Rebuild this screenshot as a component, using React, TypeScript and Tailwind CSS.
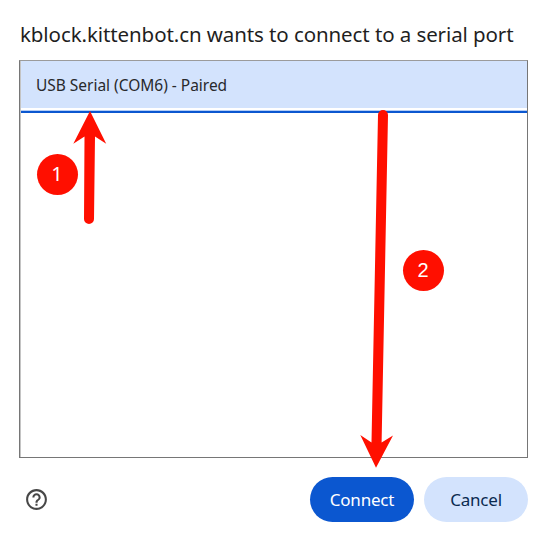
import React from 'react';
import { MdHelpOutline } from 'react-icons/md';

interface Port {
  id: string;
  name: string;
  paired: boolean;
}

const ports: Port[] = [{ id: 'com6', name: 'USB Serial (COM6)', paired: true }];

function PortList() {
  return (
    <div className="h-[398px] border border-[#767676] border-t-[#9b9b9b] bg-white">
      <div className="h-full border-l border-[#c4c4c4]">
        {ports.map((port) => (
          <div key={port.id} className="border-b-2 border-[#0b57d0]">
            <div className="flex h-[47px] items-center bg-[#d3e3fd] pl-[15px] text-[15.5px] text-[#28292c]">
              <span className="mt-[3px] tracking-[-0.02px] whitespace-nowrap">
                {port.name}
                {port.paired && ' - Paired'}
              </span>
            </div>
            <div className="h-[3px] border-b border-[#b4cdf5]" />
          </div>
        ))}
      </div>
    </div>
  );
}

function Arrows() {
  return (
    <svg className="pointer-events-none absolute inset-0" width="548" height="540" viewBox="0 0 548 540">
      <g fill="#ff0f00" stroke="none">
        <path d="M90 111 L106.2 143.8 L95 136.5 L94 219 A5 5 0 0 1 84 219 L84.5 136.5 L73.3 143.8 Z" />
        <path d="M378 115 A5 5 0 0 1 388 115 L381.6 442.6 L393 435.5 L376 467.8 L360.3 435 L371.5 442.6 Z" />
      </g>
    </svg>
  );
}

function Badge({ step, className }: { step: number; className: string }) {
  return (
    <div
      className={`absolute flex h-[41px] w-[41px] items-center justify-center rounded-full bg-[#ff0f00] text-[20px] text-white ${className}`}
    >
      {step}
    </div>
  );
}

export default function App() {
  return (
    <div className="relative h-[540px] w-[548px] overflow-hidden bg-white pt-[18px] pr-5 pl-[19px] font-['Noto_Sans',sans-serif]">
      <h1 className="h-[42px] pl-px text-[20.5px] leading-[32px] tracking-[-0.09px] whitespace-nowrap text-[#1f1f1f]">
        kblock.kittenbot.cn wants to connect to a serial port
      </h1>
      <PortList />
      <div className="mt-[19px] flex h-[45px] items-center justify-between">
        <button className="ml-[5px] text-[#474747]" aria-label="Help">
          <MdHelpOutline size={25} />
        </button>
        <div className="flex gap-2.5 text-[17px] tracking-[-0.2px]">
          <button className="h-[45px] w-[104px] rounded-full bg-[#0b57d0] text-white">Connect</button>
          <button className="h-[45px] w-[104px] rounded-full bg-[#d3e3fd] text-[#0a2a50]">Cancel</button>
        </div>
      </div>

      <Arrows />
      <Badge step={1} className="top-[153.5px] left-[36.5px] font-['Noto_Sans',sans-serif]" />
      <Badge step={2} className="top-[249.5px] left-[402.5px] font-['Liberation_Sans',sans-serif]" />
    </div>
  );
}
